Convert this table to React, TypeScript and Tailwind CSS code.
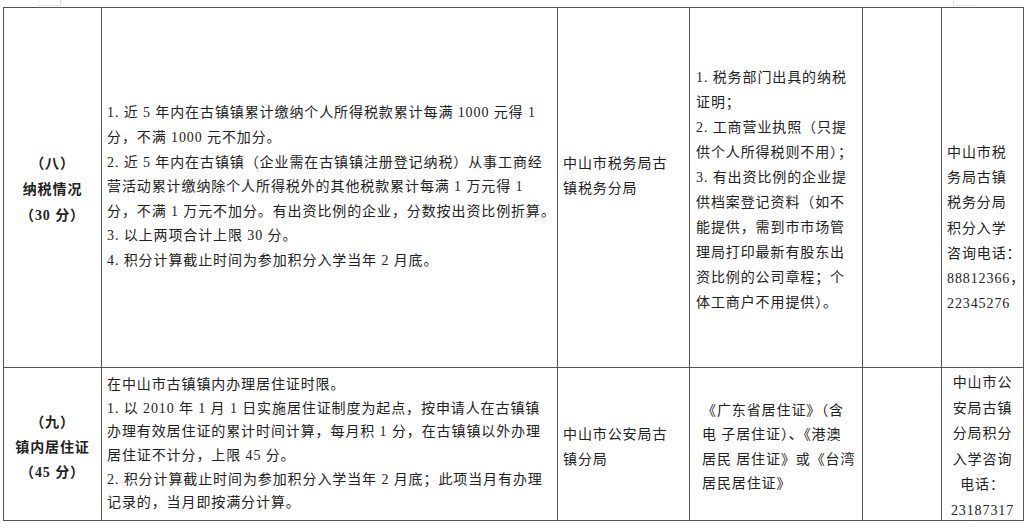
const taxRules = [
  "1. 近 5 年内在古镇镇累计缴纳个人所得税款累计每满 1000 元得 1",
  "分，不满 1000 元不加分。",
  "2. 近 5 年内在古镇镇（企业需在古镇镇注册登记纳税）从事工商经",
  "营活动累计缴纳除个人所得税外的其他税款累计每满 1 万元得 1",
  "分，不满 1 万元不加分。有出资比例的企业，分数按出资比例折算。",
  "3. 以上两项合计上限 30 分。",
  "4. 积分计算截止时间为参加积分入学当年 2 月底。",
];

const taxDocs = [
  "1. 税务部门出具的纳税",
  "证明；",
  "2. 工商营业执照（只提",
  "供个人所得税则不用）；",
  "3. 有出资比例的企业提",
  "供档案登记资料（如不",
  "能提供，需到市市场管",
  "理局打印最新有股东出",
  "资比例的公司章程；个",
  "体工商户不用提供）。",
];

const taxContact = ["中山市税", "务局古镇", "税务分局", "积分入学", "咨询电话：", "88812366，", "22345276"];

const residenceRules = [
  "在中山市古镇镇内办理居住证时限。",
  "1. 以 2010 年 1 月 1 日实施居住证制度为起点，按申请人在古镇镇",
  "办理有效居住证的累计时间计算，每月积 1 分，在古镇镇以外办理",
  "居住证不计分，上限 45 分。",
  "2. 积分计算截止时间为参加积分入学当年 2 月底；此项当月有办理",
  "记录的，当月即按满分计算。",
];

const residenceDocs = ["《广东省居住证》（含", "电 子居住证）、《港澳", "居民 居住证》或《台湾", "居民居住证》"];

const residenceContact = ["中山市公", "安局古镇", "分局积分", "入学咨询", "电话：", "23187317"];

function Lines({ items }: { items: string[] }) {
  return (
    <>
      {items.map((t, i) => (
        <div key={i} className="whitespace-pre">
          {t}
        </div>
      ))}
    </>
  );
}

export default function App() {
  return (
    <div className="h-[530px] w-[1027px] overflow-hidden bg-white font-['Liberation_Serif','Noto_Sans_CJK_SC',serif] text-[14px] tracking-[0.9px] text-[#222]">
      <div className="flex h-[7px]">
        <div className="ml-[37px] h-[6px] w-[24px] border-b border-r border-[#e2e2e2]" />
        <div className="ml-[892px] h-[6px] w-[22px] border-b border-l border-[#e2e2e2]" />
      </div>

      <div className="ml-[3px] grid w-[1021px] grid-cols-[97px_455px_131px_172px_78px_81px] grid-rows-[359px_152px] gap-px bg-[#555] p-px">
        {/* row 八 */}
        <div className="flex flex-col items-center justify-center bg-white pt-[4px] text-center font-bold leading-[26px]">
          <div>（八）</div>
          <div>纳税情况</div>
          <div>（30 分）</div>
        </div>
        <div className="flex flex-col justify-center bg-white pl-[5px] leading-[24.6px]">
          <Lines items={taxRules} />
        </div>
        <div className="flex flex-col justify-center bg-white pb-[24px] pl-[5px] leading-[25px]">
          <div>中山市税务局古</div>
          <div>镇税务分局</div>
        </div>
        <div className="flex flex-col justify-center bg-white pl-[6px] pt-[5px] leading-[25.1px]">
          <Lines items={taxDocs} />
        </div>
        <div className="bg-white" />
        <div className="flex flex-col bg-white pl-[5px] pt-[132px] leading-[25.2px]">
          <Lines items={taxContact} />
        </div>

        {/* row 九 */}
        <div className="flex flex-col items-center justify-center bg-white pt-[6px] text-center font-bold leading-[25px]">
          <div>（九）</div>
          <div>镇内居住证</div>
          <div>（45 分）</div>
        </div>
        <div className="flex flex-col justify-center bg-white pl-[5px] leading-[23.6px]">
          <Lines items={residenceRules} />
        </div>
        <div className="flex flex-col justify-center bg-white pl-[5px] pt-[5px] leading-[25px]">
          <div>中山市公安局古</div>
          <div>镇分局</div>
        </div>
        <div className="flex flex-col justify-center bg-white pl-[12px] pt-[7px] leading-[24.5px]">
          <Lines items={residenceDocs} />
        </div>
        <div className="bg-white" />
        <div className="flex flex-col items-center bg-white pt-[2px] text-center leading-[25.6px]">
          <Lines items={residenceContact} />
        </div>
      </div>
    </div>
  );
}
